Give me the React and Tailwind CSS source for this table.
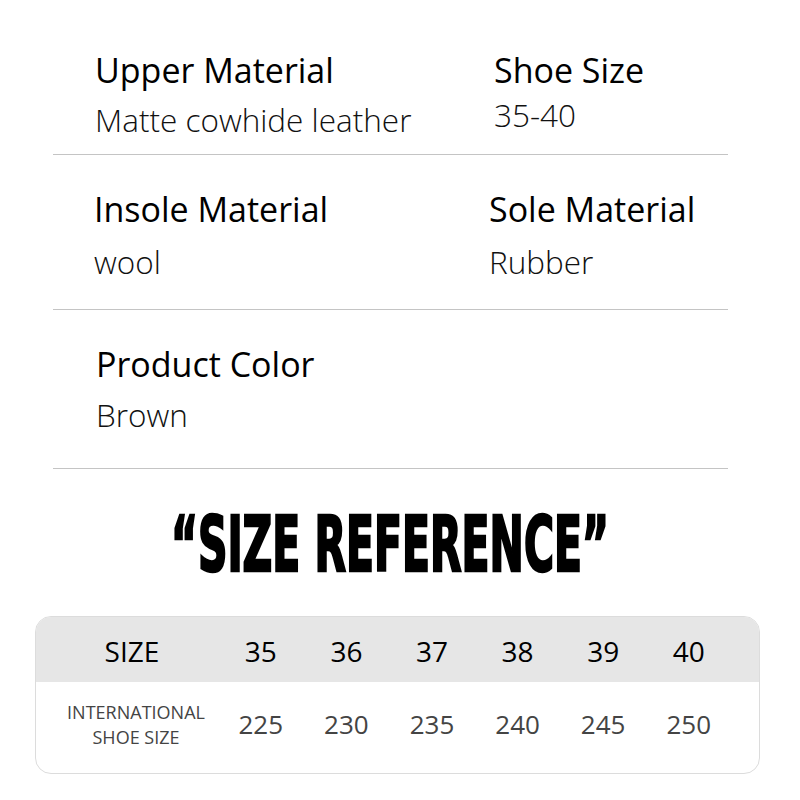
export default function App() {
  const sizes = ["35", "36", "37", "38", "39", "40"];
  const intl = ["225", "230", "235", "240", "245", "250"];
  const labelCls = "text-[34px] leading-[40px] text-black";
  const valueCls = "text-[31.5px] leading-[40px] font-light text-[#111] font-stretch-[94%]";
  return (
    <div className="w-[800px] h-[800px] bg-white relative overflow-hidden" style={{ fontFamily: '"Open Sans", "Noto Sans", sans-serif' }}>
      <div className="ml-[53px] w-[675px]">
        <div className="h-[155px] border-b border-[#c4c4c4] grid grid-cols-[441px_1fr] pt-[50px]">
          <div className="pl-[42px]">
            <div className={labelCls}>Upper Material</div>
            <div className={valueCls + " mt-[10px]"}>Matte cowhide leather</div>
          </div>
          <div>
            <div className={labelCls}>Shoe Size</div>
            <div className={valueCls + " mt-[5px]"}>35-40</div>
          </div>
        </div>
        <div className="h-[155px] border-b border-[#c4c4c4] grid grid-cols-[436px_1fr] pt-[34px]">
          <div className="pl-[41px]">
            <div className={labelCls}>Insole Material</div>
            <div className={valueCls + " mt-[13px]"}>wool</div>
          </div>
          <div>
            <div className={labelCls}>Sole Material</div>
            <div className={valueCls + " mt-[13px]"}>Rubber</div>
          </div>
        </div>
        <div className="h-[159px] border-b border-[#c4c4c4] pt-[34px] pl-[43px]">
          <div className={labelCls}>Product Color</div>
          <div className={valueCls + " mt-[11px]"}>Brown</div>
        </div>
      </div>
      <div className="h-[147px] flex items-center justify-center pt-[6px] pr-[20px]">
        <div
          className="text-[58px] font-bold text-black whitespace-nowrap scale-x-[0.785] scale-y-[1.33] [-webkit-text-stroke:2px_black]"
          style={{ fontFamily: '"DejaVu Sans Condensed", "DejaVu Sans", sans-serif' }}
        >
          “SIZE REFERENCE”
        </div>
      </div>
      <div className="ml-[35px] w-[725px] h-[158px] rounded-[16px] border border-[#dcdcdc] overflow-hidden">
        <div className="h-[65px] bg-[#e6e6e6] grid grid-cols-[172px_repeat(6,85.6px)] pl-[10px] pt-[3px] items-center text-black text-[28px] font-stretch-[92%]">
          <div className="text-center">SIZE</div>
          {sizes.map((s) => (
            <div key={s} className="text-center">{s}</div>
          ))}
        </div>
        <div className="h-[93px] grid grid-cols-[172px_repeat(6,85.6px)] pl-[10px] pb-[8px] items-center text-[#444]">
          <div className="text-center text-[18px] leading-[25px] pl-[8px] font-stretch-[95%]">INTERNATIONAL<br />SHOE SIZE</div>
          {intl.map((s) => (
            <div key={s} className="text-center text-[26px] font-stretch-[90%]">{s}</div>
          ))}
        </div>
      </div>
    </div>
  );
}
